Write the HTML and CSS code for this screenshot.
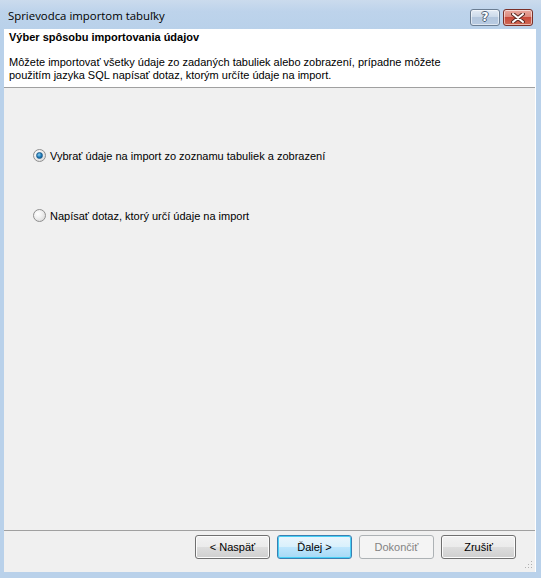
FILE: index.html
```html
<!DOCTYPE html>
<html lang="sk">

<head>
    <meta charset="UTF-8">
    <title>Sprievodca importom tabuľky</title>
    <link rel="stylesheet" href="styles.css">
</head>

<body>
    <div class="window">
        <div class="titlebar">
            <span class="title">Sprievodca importom tabuľky</span>
            <div class="caption-buttons">
                <div class="cap-btn help"><span>?</span></div>
                <div class="cap-btn close">
                    <svg width="14" height="10" viewBox="0 0 14 10">
                        <path d="M2 1 L12 9 M12 1 L2 9" stroke="#5a2a24" stroke-width="4" stroke-linecap="round" />
                        <path d="M2 1 L12 9 M12 1 L2 9" stroke="#fff" stroke-width="2" stroke-linecap="round" />
                    </svg>
                </div>
            </div>
        </div>

        <div class="client">
            <div class="header">
                <div class="header-title">Výber spôsobu importovania údajov</div>
                <p class="header-text">Môžete importovať všetky údaje zo zadaných tabuliek alebo zobrazení, prípadne môžete<br>použitím jazyka SQL napísať dotaz, ktorým určíte údaje na import.</p>
            </div>

            <div class="content">
                <label class="option">
                    <span class="radio checked"></span>
                    Vybrať údaje na import zo zoznamu tabuliek a zobrazení
                </label>
                <label class="option">
                    <span class="radio"></span>
                    Napísať dotaz, ktorý určí údaje na import
                </label>
            </div>

            <div class="footer">
                <button class="btn">&lt; Naspäť</button>
                <button class="btn default">Ďalej &gt;</button>
                <button class="btn" disabled>Dokončiť</button>
                <button class="btn">Zrušiť</button>
                <svg class="grip" width="8" height="8" viewBox="0 0 8 8">
                    <rect x="6" y="0" width="1" height="1" fill="#b0b0b0" />
                    <rect x="3" y="3" width="1" height="1" fill="#b0b0b0" />
                    <rect x="6" y="3" width="1" height="1" fill="#b0b0b0" />
                    <rect x="0" y="6" width="1" height="1" fill="#b0b0b0" />
                    <rect x="3" y="6" width="1" height="1" fill="#b0b0b0" />
                    <rect x="6" y="6" width="1" height="1" fill="#b0b0b0" />
                </svg>
            </div>
        </div>
    </div>
</body>

</html>
```

FILE: styles.css
```css
body {
    margin: 0;
    padding: 0;
    font-family: "Liberation Sans", Arial, sans-serif;
    font-size: 11px;
    color: #000;
}

.window {
    width: 541px;
    height: 578px;
    background: #b9d1ea;
    display: flex;
    flex-direction: column;
}

.titlebar {
    height: 29px;
    display: flex;
    align-items: flex-start;
    justify-content: space-between;
    background: linear-gradient(to bottom, #cbdbed 0%, #bdd3eb 40%, #b9d1ea 100%);
}

.title {
    font-family: "Open Sans", "Liberation Sans", sans-serif;
    font-size: 11.4px;
    padding: 8px 0 0 8px;
    color: #000;
}

.caption-buttons {
    display: flex;
    gap: 3px;
    margin: 9px 8px 0 0;
}

.cap-btn {
    width: 28px;
    height: 15px;
    border: 1px solid #6b7d92;
    border-radius: 3px;
    display: flex;
    align-items: center;
    justify-content: center;
    box-shadow: inset 0 0 0 1px rgba(255, 255, 255, 0.55);
}

.help {
    background: linear-gradient(to bottom, #e3ebf5 0%, #ccdaea 45%, #b3c6dd 50%, #b8cbe2 100%);
}

.help span {
    font-family: "DejaVu Sans", sans-serif;
    font-weight: bold;
    font-size: 12px;
    color: #fff;
    text-shadow: -1px 0 #4e5f74, 1px 0 #4e5f74, 0 -1px #4e5f74, 0 1px #4e5f74;
    line-height: 15px;
}

.close {
    border-color: #7a3028;
    background: linear-gradient(to bottom, #e9a99f 0%, #dc8a7e 45%, #c84a3b 50%, #cf6a55 100%);
}

.client {
    flex: 1;
    margin: 0 5px 6px 4px;
    background: #f0f0f0;
    border-right: 1px solid #fff;
    display: flex;
    flex-direction: column;
}

.header {
    height: 58px;
    background: #fff;
    border-bottom: 1px solid #a0a0a0;
    padding: 0 5px;
}

.header-title {
    font-weight: bold;
    padding-top: 1px;
    line-height: 14px;
}

.header-text {
    margin: 12px 0 0 0;
    line-height: 13px;
}

.content {
    flex: 1;
    display: flex;
    flex-direction: column;
    padding: 61px 0 0 29px;
    gap: 47px;
}

.option {
    display: flex;
    align-items: center;
    gap: 4px;
    height: 13px;
}

.radio {
    width: 11px;
    height: 11px;
    border: 1px solid #8f8f8f;
    border-radius: 50%;
    background: radial-gradient(circle at 35% 35%, #ffffff 0%, #f0f0f0 40%, #d2d2d2 100%);
    display: flex;
    align-items: center;
    justify-content: center;
}

.radio.checked::after {
    content: "";
    width: 5px;
    height: 5px;
    border-radius: 50%;
    background: radial-gradient(circle at 40% 35%, #8ad0f0 0%, #1a78b8 55%, #0e4f82 100%);
    border: 1px solid #205f8e;
}

.footer {
    position: relative;
    height: 42px;
    border-top: 1px solid #a0a0a0;
    display: flex;
    justify-content: flex-end;
    align-items: flex-start;
    gap: 7px;
    padding: 4px 19px 0 0;
    box-sizing: border-box;
}

.btn {
    width: 75px;
    height: 24px;
    font-family: "Liberation Sans", Arial, sans-serif;
    font-size: 11px;
    color: #000;
    border: 1px solid #707070;
    border-radius: 3px;
    background: linear-gradient(to bottom, #f2f2f2 0%, #ebebeb 50%, #dddddd 51%, #cfcfcf 100%);
    box-shadow: inset 0 0 0 1px #fcfcfc;
    padding: 0;
}

.btn.default {
    border-color: #3c7fb1;
    box-shadow: inset 0 0 0 1px #48d0f6;
    background: linear-gradient(to bottom, #eaf6fd 0%, #d9f0fc 50%, #bee6fd 51%, #a7d9f5 100%);
}

.btn:disabled {
    border-color: #adb2b5;
    background: #f4f4f4;
    box-shadow: none;
    color: #838383;
}

.grip {
    position: absolute;
    right: 2px;
    bottom: 3px;
}
```
